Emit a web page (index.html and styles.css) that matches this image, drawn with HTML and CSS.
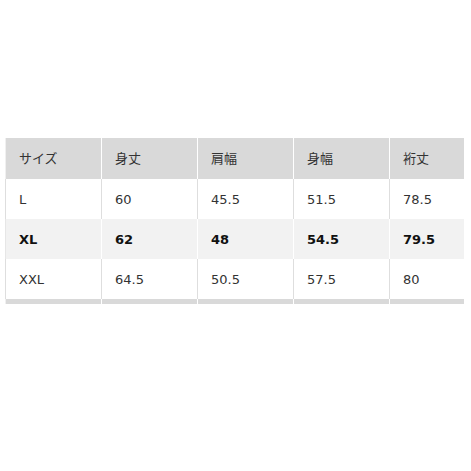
FILE: index.html
```html
<!DOCTYPE html>
<html lang="ja">
<head>
<meta charset="utf-8">
<link rel="stylesheet" href="styles.css">
</head>
<body>
<div class="wrap">
<table class="size">
<colgroup><col class="c"><col class="c"><col class="c"><col class="c"><col class="last"></colgroup>
<thead>
<tr><th>サイズ</th><th>身丈</th><th>肩幅</th><th>身幅</th><th>裄丈</th></tr>
</thead>
<tbody>
<tr><td>L</td><td>60</td><td>45.5</td><td>51.5</td><td>78.5</td></tr>
<tr class="hl"><td>XL</td><td>62</td><td>48</td><td>54.5</td><td>79.5</td></tr>
<tr><td>XXL</td><td>64.5</td><td>50.5</td><td>57.5</td><td>80</td></tr>
</tbody>
<tfoot>
<tr><td></td><td></td><td></td><td></td><td></td></tr>
</tfoot>
</table>
</div>
</body>
</html>
```
FILE: styles.css
```css
html, body { margin: 0; padding: 0; background: #fff; }
.wrap { padding: 138px 0 0 5px; }
.size {
  border-collapse: collapse;
  table-layout: fixed;
  width: 458px;
  font-family: "DejaVu Sans", "Noto Sans CJK JP", sans-serif;
  font-size: 13px;
  color: #333;
}
.size col.c { width: 96px; }
.size col.last { width: 74px; }
.size th, .size td {
  padding: 0 0 0 13px;
  text-align: left;
  vertical-align: middle;
  border-left: 1px solid #dedede;
  box-sizing: border-box;
}
.size thead th {
  background: #d9d9d9;
  height: 41px;
  font-weight: normal;
  border-left: 1px solid #fff;
  padding-bottom: 2px;
}
.size thead th:first-child { border-left: 1px solid #f0f0f0; }
.size tbody td { height: 40px; }
.size tbody tr.hl td {
  background: #f2f2f2;
  font-weight: bold;
  color: #111;
  border-left-color: #fff;
}
.size tbody tr.hl td:first-child { border-left-color: #e6e6e6; }
.size tfoot td {
  height: 5px;
  padding: 0;
  background: #d9d9d9;
  border-left: 1px solid #fff;
}
.size tfoot td:first-child { border-left-color: #f0f0f0; }
```
